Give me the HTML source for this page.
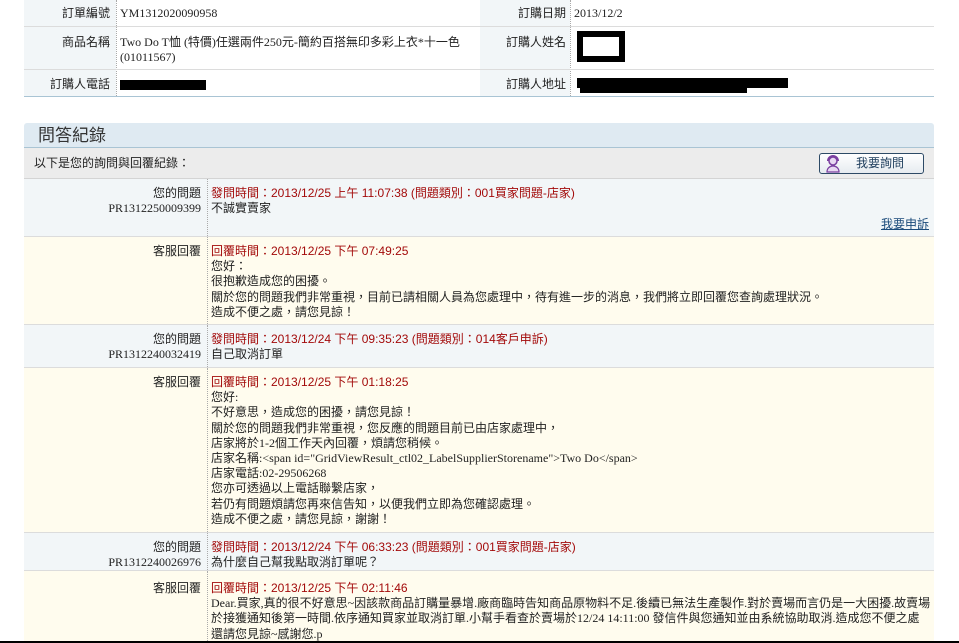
<!DOCTYPE html>
<html><head><meta charset="utf-8"><style>
*{margin:0;padding:0;box-sizing:border-box}
body{width:959px;height:643px;overflow:hidden;background:#fff;font-family:"Liberation Serif","Noto Sans CJK TC",serif;font-size:12px;color:#222;position:relative}
.a{position:absolute}
.lbl{text-align:right;background:#f2f6f8}
.row{position:absolute;left:24px;width:910px;border-bottom:1px solid #dcdcdc}
.q{background:#f2f6f8}
.r{background:#fffcee}
.l{position:absolute;left:0;width:177px;text-align:right;line-height:15.2px}
.v{position:absolute;left:187px;right:4px;line-height:15.2px}
.div{position:absolute;left:183px;top:0;bottom:0;border-left:1px dotted #aaa}
.red{color:#a30a0a;font-family:"Liberation Sans","Noto Sans CJK TC",sans-serif}
.blk{background:#000;position:absolute}
</style></head><body>
<div class="a" style="left:24px;top:0;width:910px;height:97px;border-bottom:1px solid #a9c4d4">
 <div class="a lbl" style="left:0;top:0;width:92px;height:96px"></div>
 <div class="a lbl" style="left:456px;top:0;width:90px;height:96px;background:#f2f6f8"></div>
 <div class="a" style="left:92px;top:0;height:96px;border-left:1px dotted #aaa"></div>
 <div class="a" style="left:546px;top:0;height:96px;border-left:1px dotted #aaa"></div>
 <div class="a" style="left:0;top:26px;width:910px;border-top:1px solid #dcdcdc"></div>
 <div class="a" style="left:0;top:69px;width:910px;border-top:1px solid #dcdcdc"></div>
 <div class="a" style="left:0;top:6px;width:86px;text-align:right;line-height:15px">訂單編號</div>
 <div class="a" style="left:96px;top:6px;line-height:15px">YM1312020090958</div>
 <div class="a" style="left:0;top:35px;width:86px;text-align:right;line-height:15px">商品名稱</div>
 <div class="a" style="left:96px;top:35px;line-height:15px">Two Do T恤 (特價)任選兩件250元-簡約百搭無印多彩上衣*十一色<br>(01011567)</div>
 <div class="a" style="left:0;top:77px;width:86px;text-align:right;line-height:15px">訂購人電話</div>
 <div class="a" style="left:456px;top:6px;width:86px;text-align:right;line-height:15px">訂購日期</div>
 <div class="a" style="left:550px;top:6px;line-height:15px">2013/12/2</div>
 <div class="a" style="left:456px;top:35px;width:86px;text-align:right;line-height:15px">訂購人姓名</div>
 <div class="a" style="left:456px;top:77px;width:86px;text-align:right;line-height:15px">訂購人地址</div>
</div>
<div class="blk" style="left:120px;top:80px;width:86px;height:10px"></div>
<div class="a" style="left:577px;top:31px;width:48px;height:31px;border:6px solid #000;background:#fff"></div>
<div class="blk" style="left:577px;top:78px;width:211px;height:10px"></div>
<div class="blk" style="left:580px;top:86px;width:167px;height:7px"></div>

<div class="a" style="left:24px;top:123px;width:910px;height:25px;background:#dfeaf2;border-bottom:1px solid #a9c4d4;border-radius:3px 3px 0 0"></div>
<div class="a" style="left:38px;top:125px;font-size:17px;line-height:21px;color:#333;font-family:'Liberation Sans','Noto Sans CJK TC',sans-serif">問答紀錄</div>
<div class="a" style="left:24px;top:148px;width:910px;height:31px;background:#ececec;border-bottom:1px solid #d4d4d4"></div>
<div class="a" style="left:34px;top:156px;line-height:15px">以下是您的詢問與回覆紀錄：</div>
<div class="a" style="left:819px;top:153px;width:105px;height:21px;border:1px solid #2d4a66;border-radius:3px;background:linear-gradient(#fff,#e6ebf0)">
 <svg class="a" style="left:4px;top:1px" width="18" height="18" viewBox="0 0 18 18"><circle cx="9" cy="6" r="4" fill="#e8d8f2" stroke="#7a3fa0" stroke-width="1.5"/><path d="M4 6a5 5 0 0 1 10 0" fill="none" stroke="#7a3fa0" stroke-width="2"/><path d="M3 17c0-4 3-6 6-6s6 2 6 6z" fill="#e8d8f2" stroke="#7a3fa0" stroke-width="1.2"/></svg>
 <div class="a" style="left:36px;top:2px;font-size:12px;line-height:15px;color:#1a3a5a">我要詢問</div>
</div>

<div class="row q" style="top:179px;height:58px"><div class="div"></div>
 <div class="l" style="top:7px">您的問題<br>PR1312250009399</div>
 <div class="v" style="top:7px"><span class="red">發問時間：2013/12/25 上午 11:07:38 (問題類別：001買家問題-店家)</span><br>不誠實賣家</div>
 <div class="a" style="right:5px;top:38px;color:#1a4a7a;text-decoration:underline;line-height:15px">我要申訴</div>
</div>
<div class="row r" style="top:237px;height:88px"><div class="div"></div>
 <div class="l" style="top:7px">客服回覆</div>
 <div class="v" style="top:7px"><span class="red">回覆時間：2013/12/25 下午 07:49:25</span><br>您好：<br>很抱歉造成您的困擾。<br>關於您的問題我們非常重視，目前已請相關人員為您處理中，待有進一步的消息，我們將立即回覆您查詢處理狀況。<br>造成不便之處，請您見諒！</div>
</div>
<div class="row q" style="top:325px;height:43px"><div class="div"></div>
 <div class="l" style="top:7px">您的問題<br>PR1312240032419</div>
 <div class="v" style="top:7px"><span class="red">發問時間：2013/12/24 下午 09:35:23 (問題類別：014客戶申訴)</span><br>自己取消訂單</div>
</div>
<div class="row r" style="top:368px;height:165px"><div class="div"></div>
 <div class="l" style="top:7px">客服回覆</div>
 <div class="v" style="top:7px"><span class="red">回覆時間：2013/12/25 下午 01:18:25</span><br>您好:<br>不好意思，造成您的困擾，請您見諒！<br>關於您的問題我們非常重視，您反應的問題目前已由店家處理中，<br>店家將於1-2個工作天內回覆，煩請您稍候。<br>店家名稱:&lt;span id="GridViewResult_ctl02_LabelSupplierStorename"&gt;Two Do&lt;/span&gt;<br>店家電話:02-29506268<br>您亦可透過以上電話聯繫店家，<br>若仍有問題煩請您再來信告知，以便我們立即為您確認處理。<br>造成不便之處，請您見諒，謝謝！</div>
</div>
<div class="row q" style="top:533px;height:38px"><div class="div"></div>
 <div class="l" style="top:7px">您的問題<br>PR1312240026976</div>
 <div class="v" style="top:7px"><span class="red">發問時間：2013/12/24 下午 06:33:23 (問題類別：001買家問題-店家)</span><br>為什麼自己幫我點取消訂單呢？</div>
</div>
<div class="row r" style="top:571px;height:72px;border-bottom:none"><div class="div"></div>
 <div class="l" style="top:10px">客服回覆</div>
 <div class="v" style="top:10px;right:2px;white-space:nowrap"><span class="red">回覆時間：2013/12/25 下午 02:11:46</span><br>Dear.買家,真的很不好意思~因該款商品訂購量暴增.廠商臨時告知商品原物料不足.後續已無法生產製作.對於賣場而言仍是一大困擾.故賣場<br>於接獲通知後第一時間.依序通知買家並取消訂單.小幫手看查於賣場於12/24 14:11:00 發信件與您通知並由系統協助取消.造成您不便之處<br>還請您見諒~感謝您.p</div>
</div>
<div class="blk" style="left:0;top:641px;width:959px;height:2px"></div>
</body></html>
